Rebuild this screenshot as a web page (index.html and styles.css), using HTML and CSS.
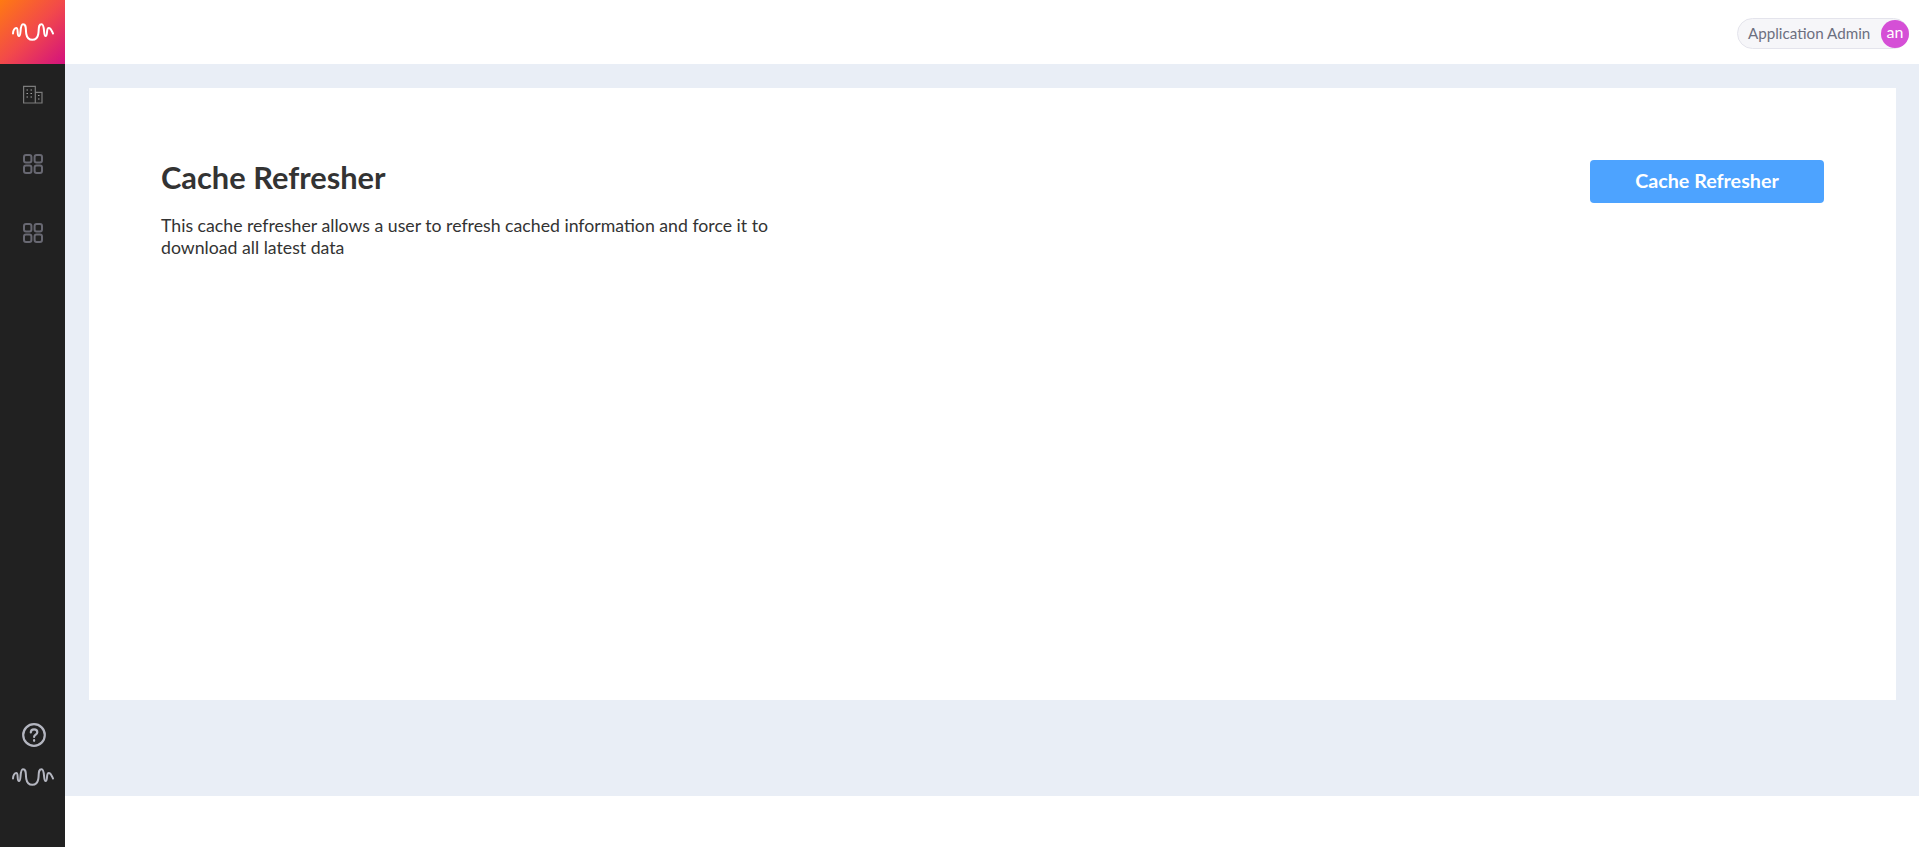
FILE: index.html
```html
<!DOCTYPE html>
<html lang="en">
<head>
<meta charset="utf-8">
<title>Cache Refresher</title>
<link rel="stylesheet" href="styles.css">
</head>
<body>
<aside class="sidebar">
  <div class="brand">
    <svg class="wave wave-brand" viewBox="0 0 42 18"><path d="M1 10.500C1 7 2.800 5 4.300 5C6.800 5 4.500 13 7 13C9.500 13 7.500 1.200 11 1.200C14.800 1.200 13.400 6 14.300 11C15 15 17 16.800 20.300 16.800C23.600 16.800 25.600 15 26.300 11C27.200 6 25.800 1.200 29.600 1.200C33.100 1.200 31.100 13 33.600 13C36.100 13 33.800 5 36.800 5C39 5 39.500 7.500 41 10.500"/></svg>
  </div>
  <nav class="nav">
    <a class="nav-item"><svg class="icon" viewBox="0 0 20 20"><path class="line" d="M.6 2.300h11.700V19H.6zM12.300 8.300H19V19h-6.700z"/><path class="dots" d="M3.500 6h1.500M7.500 6H9M3.500 9.500h1.500M7.500 9.500H9M3.500 13h1.500M7.500 13H9M15 11.500h1.500M15 15h1.500"/></svg></a>
    <a class="nav-item"><svg class="icon" viewBox="0 0 20 20"><rect class="grid" x="1" y="1" width="7.400" height="7.400" rx="2"/><rect class="grid" x="11.600" y="1" width="7.400" height="7.400" rx="2"/><rect class="grid" x="1" y="11.600" width="7.400" height="7.400" rx="2"/><rect class="grid" x="11.600" y="11.600" width="7.400" height="7.400" rx="2"/></svg></a>
    <a class="nav-item"><svg class="icon" viewBox="0 0 20 20"><rect class="grid" x="1" y="1" width="7.400" height="7.400" rx="2"/><rect class="grid" x="11.600" y="1" width="7.400" height="7.400" rx="2"/><rect class="grid" x="1" y="11.600" width="7.400" height="7.400" rx="2"/><rect class="grid" x="11.600" y="11.600" width="7.400" height="7.400" rx="2"/></svg></a>
  </nav>
  <div class="sidebar-foot">
    <svg class="help" viewBox="0 0 24 24"><circle cx="12" cy="12" r="10.800"/><path d="M8.800 9.500c0-2 1.500-3.200 3.300-3.200s3.200 1.200 3.200 2.900c0 2.300-3.200 2.500-3.200 4.800"/><path d="M12.100 17.200v.6"/></svg>
    <svg class="wave wave-foot" viewBox="0 0 42 18"><path d="M1 10.500C1 7 2.800 5 4.300 5C6.800 5 4.500 13 7 13C9.500 13 7.500 1.200 11 1.200C14.800 1.200 13.400 6 14.300 11C15 15 17 16.800 20.300 16.800C23.600 16.800 25.600 15 26.300 11C27.200 6 25.800 1.200 29.600 1.200C33.100 1.200 31.100 13 33.600 13C36.100 13 33.800 5 36.800 5C39 5 39.500 7.500 41 10.500"/></svg>
  </div>
</aside>
<div class="main">
  <header class="topbar">
    <div class="user">
      <span class="user-name">Application Admin</span>
      <span class="avatar">an</span>
    </div>
  </header>
  <section class="content">
    <div class="card">
      <div class="intro">
        <h1 class="title">Cache Refresher</h1>
        <p class="desc">This cache refresher allows a user to refresh cached information and force it to download all latest data</p>
      </div>
      <button class="btn">Cache Refresher</button>
    </div>
  </section>
</div>
</body>
</html>
```

FILE: styles.css
```css
* { box-sizing: border-box; }
html, body { margin: 0; height: 100%; }
body {
  display: flex;
  height: 847px;
  overflow: hidden;
  background: #fff;
  font-family: "Lato", "Noto Sans", sans-serif;
}
.sidebar {
  width: 65px;
  flex: none;
  background: #212121;
  display: flex;
  flex-direction: column;
}
.brand {
  height: 64px;
  display: flex;
  align-items: center;
  justify-content: center;
  padding-left: 1px;
  background: linear-gradient(135deg, #ff7a12 0%, #f2494a 50%, #d3117f 100%);
}
.wave { fill: none; stroke-linecap: round; stroke-linejoin: round; }
.wave-brand { width: 42px; height: 18px; stroke: #fff; stroke-width: 2; }
.wave-foot { width: 42px; height: 18px; stroke: #b4b6c0; stroke-width: 2; }
.nav { display: flex; flex-direction: column; padding: 20px 0 0 1px; }
.nav-item { height: 69.500px; display: flex; justify-content: center; }
.icon { width: 20px; height: 20px; fill: none; }
.line { stroke: #7c7c7c; stroke-width: 1.200; }
.dots { stroke: #a0a0a0; stroke-width: 1.200; }
.grid { stroke: #686872; stroke-width: 2; }
.sidebar-foot {
  margin-top: auto;
  padding: 0 0 61px 1px;
  display: flex;
  flex-direction: column;
  align-items: center;
  gap: 21px;
}
.help { width: 24px; height: 24px; margin-left: 2px; fill: none; stroke: #b4b6c0; stroke-width: 2.200; stroke-linecap: round; }
.main { flex: 1; min-width: 0; display: flex; flex-direction: column; }
.topbar {
  height: 64px;
  flex: none;
  display: flex;
  align-items: center;
  justify-content: flex-end;
  padding: 3px 10px 0 0;
}
.user {
  display: flex;
  align-items: center;
  justify-content: space-between;
  width: 172px;
  height: 31px;
  padding-left: 10px;
  background: #f6f6f9;
  border: 1px solid #e4e4ec;
  border-radius: 16px;
}
.user-name { font-size: 15.200px; color: #6c6f80; white-space: nowrap; padding-bottom: 2px; }
.avatar {
  width: 28px;
  height: 28px;
  margin-right: -1px;
  border-radius: 50%;
  background: #d54fd6;
  color: #fff;
  font-size: 16px;
  display: flex;
  align-items: center;
  justify-content: center;
  padding-bottom: 4px;
}
.content {
  height: 732px;
  flex: none;
  padding: 24px 23px 96px 24px;
  background: #e9eef6;
}
.card {
  height: 612px;
  background: #fff;
  padding: 72px 72px 0;
  display: flex;
  justify-content: space-between;
  align-items: flex-start;
}
.intro { width: 620px; }
.title {
  margin: 0;
  font-size: 30.800px;
  line-height: 36px;
  font-weight: 700;
  color: #333;
}
.desc {
  margin: 19px 0 0;
  font-size: 17.700px;
  line-height: 22px;
  color: #333;
}
.btn {
  width: 234px;
  height: 43px;
  padding-bottom: 3px;
  background: #4da3ff;
  color: #fff;
  border: 0;
  border-radius: 4px;
  font-family: inherit;
  font-size: 19.700px;
  font-weight: 700;
}
```
